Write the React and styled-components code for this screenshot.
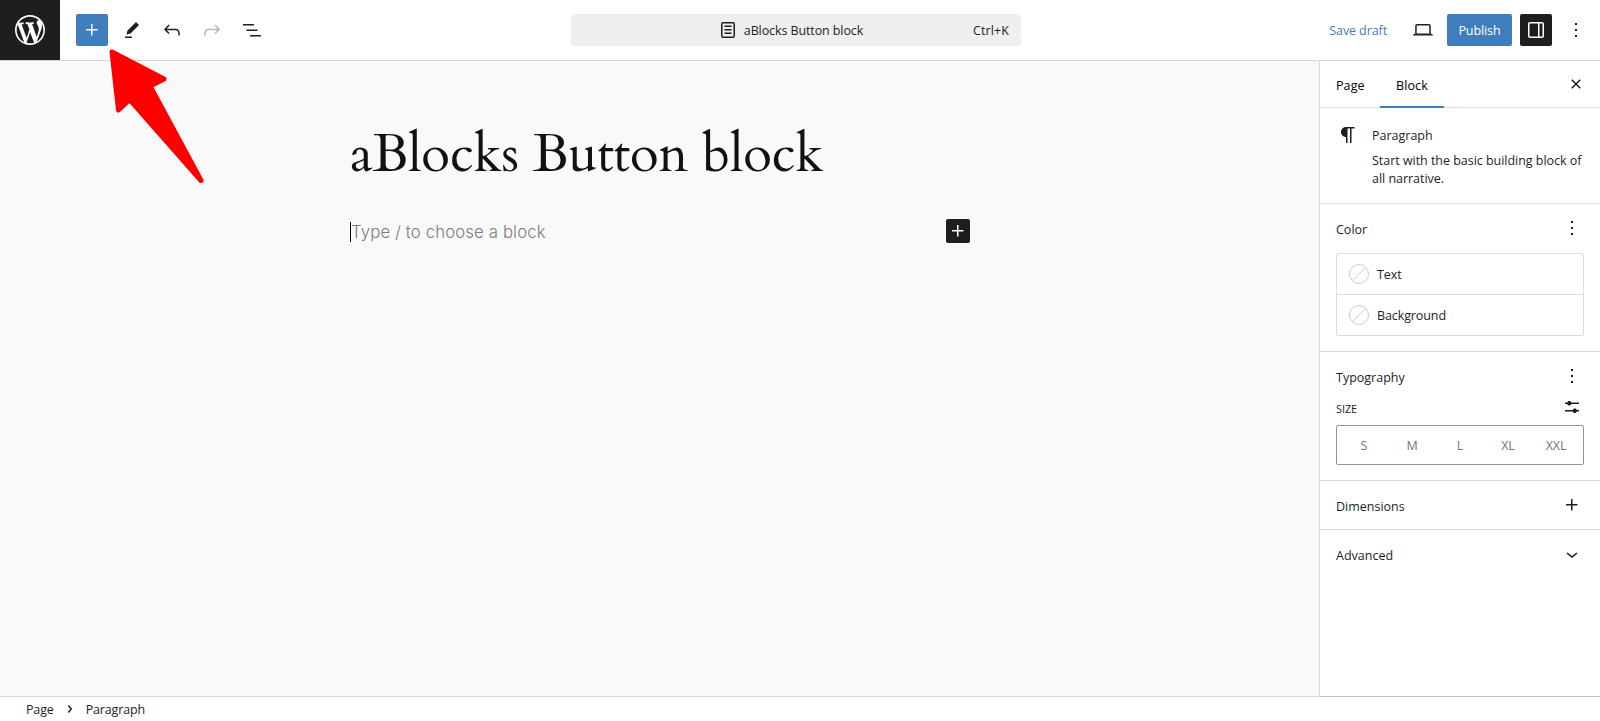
import React from "react";
import styled, { createGlobalStyle } from "styled-components";

const Global = createGlobalStyle`
  *, *::before, *::after { box-sizing: border-box; }
  body { margin: 0; background: #fff; }
  h1, h2, p { margin: 0; }
  button { border: 0; padding: 0; background: none; color: inherit; font: inherit; letter-spacing: inherit; }
`;

const ICONS = {
  plus: ["M11 12.5V17.5H12.5V12.5H17.5V11H12.5V6H11V11H6V12.5H11Z"],
  edit: ["m19 7-3-3-8.5 8.5-1 4 4-1L19 7Zm-7 11.5H5V20h7v-1.5Z"],
  undo: ["M18.3 11.7c-.6-.6-1.4-.9-2.3-.9H6.7l2.9-3.3-1.1-1-4.5 5L8.5 16l1-1-2.7-2.7H16c.5 0 .9.2 1.3.5 1 1 1 3.4 1 4.5v.3h1.5v-.2c0-1.5 0-4.3-1.5-5.7z"],
  redo: ["M15.6 6.5l-1.1 1 2.9 3.3H8c-.9 0-1.7.3-2.3.9-1.4 1.5-1.4 4.2-1.4 5.6v.2h1.5v-.3c0-1.1 0-3.5 1-4.5.3-.3.7-.5 1.3-.5h9.2L14.5 15l1.1 1.1 4.6-4.6-4.6-5z"],
  list: ["M3 6h11v1.5H3V6Zm3.5 5.5h11V13h-11v-1.5ZM21 17H10v1.5h11V17Z"],
  page: [
    "M15.5 7.5h-7V9h7V7.5Zm-7 3.5h7v1.5h-7V11Zm7 3.5h-7V16h7v-1.5Z",
    "M17 4H7a2 2 0 0 0-2 2v12a2 2 0 0 0 2 2h10a2 2 0 0 0 2-2V6a2 2 0 0 0-2-2ZM7 5.5h10a.5.5 0 0 1 .5.5v12a.5.5 0 0 1-.5.5H7a.5.5 0 0 1-.5-.5V6a.5.5 0 0 1 .5-.5Z",
  ],
  desktop: ["M20.5 16h-.7V8c0-1.1-.9-2-2-2H6.2c-1.1 0-2 .9-2 2v8h-.7c-.8 0-1.5.7-1.5 1.5h20c0-.8-.7-1.5-1.5-1.5zM5.7 8c0-.3.2-.5.5-.5h11.6c.3 0 .5.2.5.5v7.6H5.7V8z"],
  drawer: ["M18 4H6c-1.1 0-2 .9-2 2v12c0 1.1.9 2 2 2h12c1.1 0 2-.9 2-2V6c0-1.1-.9-2-2-2zm-4 14.5H6c-.3 0-.5-.2-.5-.5V6c0-.3.2-.5.5-.5h8v13zm4.5-.5c0 .3-.2.5-.5.5h-2.5v-13H18c.3 0 .5.2.5.5v12z"],
  more: ["M13 19h-2v-2h2v2zm0-6h-2v-2h2v2zm0-6h-2V5h2v2z"],
  close: ["M12 13.06l3.712 3.713 1.061-1.06L13.061 12l3.712-3.712-1.06-1.06L12 10.938 8.288 7.227l-1.061 1.06L10.939 12l-3.712 3.712 1.06 1.061L12 13.061z"],
  paragraph: ["m9.99609 14v-.2251l.00391.0001v6.225h1.5v-14.5h2.5v14.5h1.5v-14.5h3v-1.5h-8.50391c-2.76142 0-5 2.23858-5 5 0 2.7614 2.23858 5 5 5z"],
  settings: [
    "m19 7.5h-7.628c-.3089-.87389-1.1423-1.5-2.122-1.5-.97966 0-1.81309.62611-2.12197 1.5h-2.12803v1.5h2.12803c.30888.87389 1.14231 1.5 2.12197 1.5.9797 0 1.8131-.62611 2.122-1.5h7.628z",
    "m19 15h-2.128c-.3089-.8739-1.1423-1.5-2.122-1.5s-1.8131.6261-2.122 1.5h-7.628v1.5h7.628c.3089.8739 1.1423 1.5 2.122 1.5s1.8131-.6261 2.122-1.5h2.128z",
  ],
  chevronDown: ["M17.5 11.6L12 16l-5.5-4.4.9-1.2L12 14l4.5-3.6 1 1.2z"],
  chevronRight: ["M10.8622 8.04053L14.2805 12.0286L10.8622 16.0167L9.72327 15.0405L12.3049 12.0286L9.72327 9.01672L10.8622 8.04053Z"],
};

const Svg = styled.svg`
  display: block;
  flex: none;
  fill: currentColor;
`;

const Icon = ({ name, size = 24 }) => (
  <Svg width={size} height={size} viewBox="0 0 24 24" fillRule="evenodd">
    {ICONS[name].map((d) => <path key={d} d={d} />)}
  </Svg>
);

const WordPressLogo = () => (
  <Svg width="36" height="36" viewBox="-2 -2 24 24">
    <path d="M20 10c0-5.51-4.49-10-10-10C4.48 0 0 4.49 0 10c0 5.52 4.48 10 10 10 5.51 0 10-4.48 10-10zM7.78 15.37L4.37 6.22c.55-.02 1.17-.08 1.17-.08.5-.06.44-1.13-.06-1.11 0 0-1.45.11-2.37.11-.18 0-.37 0-.58-.01C4.12 2.69 6.87 1.11 10 1.11c2.33 0 4.45.87 6.05 2.34-.68-.11-1.65.39-1.65 1.58 0 .74.45 1.36.9 2.1.35.61.55 1.36.55 2.46 0 1.49-1.4 5-1.4 5l-3.03-8.37c.54-.02.82-.17.82-.17.5-.05.44-1.25-.06-1.22 0 0-1.44.12-2.38.12-.87 0-2.33-.12-2.33-.12-.5-.03-.56 1.2-.06 1.22l.92.08 1.26 3.41zM17.41 10c.24-.64.74-1.87.43-4.25.7 1.29 1.05 2.71 1.05 4.25 0 3.29-1.73 6.24-4.4 7.78.97-2.59 1.94-5.2 2.92-7.78zM6.1 18.09C3.12 16.65 1.11 13.53 1.11 10c0-1.3.23-2.48.72-3.59C3.25 10.3 4.67 14.2 6.1 18.09zm4.03-6.63l2.58 6.98c-.86.29-1.76.45-2.71.45-.79 0-1.57-.11-2.29-.33.81-2.38 1.62-4.74 2.42-7.1z" />
  </Svg>
);

const Editor = styled.div`
  position: relative;
  display: flex;
  flex-direction: column;
  width: 1600px;
  height: 721px;
  overflow: hidden;
  background: #fff;
  color: #1e1e1e;
  font: 400 12.5px/18px "Open Sans", "Noto Sans", sans-serif;
  letter-spacing: -0.1px;
`;

const Header = styled.header`
  display: grid;
  grid-template-columns: 571px 450px 1fr;
  align-items: center;
  height: 61px;
  border-bottom: 1px solid #d8d8d8;
`;

const HeaderTools = styled.div`
  display: flex;
  align-items: center;
  gap: 8px;
`;

const HeaderActions = styled(HeaderTools)`
  justify-content: flex-end;
  padding-right: 8px;
`;

const HomeLink = styled.div`
  display: grid;
  place-items: center;
  width: 60px;
  height: 60px;
  margin-right: 8px;
  background: #1e1e1e;
  color: #fff;
`;

const TONES = {
  plain: "background: transparent; color: #1e1e1e;",
  primary: "background: #407dbd; color: #fff;",
  dark: "background: #1e1e1e; color: #fff;",
  disabled: "background: transparent; color: #b8b8b8;",
};

const IconButton = styled.button`
  display: grid;
  place-items: center;
  flex: none;
  width: ${(p) => p.$size || 32}px;
  height: ${(p) => p.$size || 32}px;
  border-radius: 2px;
  ${(p) => TONES[p.$tone || "plain"]}
`;

const CommandBar = styled.div`
  display: grid;
  grid-template-columns: 1fr auto 1fr;
  align-items: center;
  height: 32px;
  padding: 0 12px;
  border-radius: 4px;
  background: #efefef;
`;

const DocumentTitle = styled.div`
  grid-column: 2;
  display: flex;
  align-items: center;
  gap: 4px;
  margin-right: 13px;

  span { padding-top: 1px; }
`;

const Shortcut = styled.span`
  justify-self: end;
  padding-top: 1px;
  letter-spacing: 0.1px;
`;

const TextButton = styled.button`
  height: 32px;
  padding: 2px 12px 0;
  border-radius: 2px;
  background: ${(p) => (p.$primary ? "#407dbd" : "transparent")};
  color: ${(p) => (p.$primary ? "#fff" : "#407dbd")};
  font-weight: ${(p) => (p.$primary ? 500 : 400)};
  ${(p) => p.$primary && "width: 65px; padding: 2px 0 0;"}
`;

const Body = styled.div`
  display: flex;
  height: 636px;
`;

const Canvas = styled.main`
  flex: 1;
  padding: 61px 0 0 350px;
  border-bottom: 1px solid #ddd;
  background: #f9f9f9;
`;

const PostTitle = styled.h1`
  height: 66px;
  color: #111;
  font: 400 52.9px/66px "Cardo", "Liberation Serif", serif;
  letter-spacing: -0.3px;
  white-space: nowrap;
`;

const EmptyBlock = styled.div`
  display: flex;
  align-items: center;
  justify-content: space-between;
  width: 620px;
  height: 24px;
  margin-top: 31px;
`;

const Placeholder = styled.p`
  height: 20px;
  margin-top: 2px;
  border-left: 1px solid #000;
  color: #7c7c7c;
  font: 300 16.8px/20px Inter, sans-serif;
  letter-spacing: 0.11px;
`;

const Sidebar = styled.aside`
  width: 281px;
  border-left: 1px solid #d8d8d8;
  border-bottom: 1px solid #c4c4c4;
  background: #fff;
`;

const Tabs = styled.div`
  display: flex;
  height: 47px;
  padding-right: 8px;
  border-bottom: 1px solid #ddd;
`;

const Tab = styled.button`
  height: 47px;
  padding: 2px 0 0 16px;
  color: #000;
  font-weight: 500;
  letter-spacing: 0.1px;
  text-align: left;
  width: ${(p) => p.$width}px;
  box-shadow: ${(p) => (p.$active ? "inset 0 -2px 0 #407dbd" : "none")};
`;

const TabClose = styled.div`
  margin: 7px 0 0 auto;
`;

const BlockCard = styled.section`
  display: flex;
  gap: 12px;
  height: 96px;
  padding: 15px 16px;
  border-bottom: 1px solid #ddd;
`;

const BlockText = styled.div`
  padding-top: 3px;
`;

const Heading = styled.h2`
  font-size: inherit;
  line-height: 20px;
  font-weight: 500;
  letter-spacing: 0;
`;

const Description = styled.p`
  margin-top: 6px;
  letter-spacing: -0.03px;
  white-space: nowrap;
`;

const Panel = styled.section`
  height: ${(p) => p.$height}px;
  padding: 0 16px;
  border-bottom: ${(p) => (p.$last ? 0 : "1px solid #ddd")};
`;

const PanelHeader = styled.div`
  display: flex;
  align-items: center;
  justify-content: space-between;
  height: 48px;

  ${Heading} { padding-top: 4px; }
`;

const ColorList = styled.div`
  height: 83px;
  margin-top: 1px;
  border: 1px solid #ddd;
  border-radius: 2px;
`;

const ColorRow = styled.div`
  display: flex;
  align-items: center;
  gap: 8px;
  height: 40px;
  padding: 0 12px;

  & + & { height: 41px; border-top: 1px solid #ddd; }
`;

const ColorName = styled.span`
  padding-top: 1px;
`;

const Swatch = styled.span`
  width: 20px;
  height: 20px;
  border: 1px solid #ccc;
  border-radius: 50%;
  background: linear-gradient(-45deg, transparent 48%, #ccc 48%, #ccc 52%, transparent 52%);
`;

const SizeHeader = styled.div`
  display: flex;
  align-items: center;
  justify-content: space-between;
  height: 24px;
  margin-top: -5px;
  font-size: 10.8px;
  font-weight: 500;
  letter-spacing: 0;
`;

const SizeLabel = styled.span`
  padding-top: 4px;
`;

const SizeOptions = styled.div`
  display: grid;
  grid-template-columns: repeat(5, 48px);
  justify-content: center;
  align-items: center;
  height: 40px;
  margin-top: 6px;
  padding-top: 1px;
  border: 1px solid #949494;
  border-radius: 2px;
  color: #757575;
  text-align: center;
`;

const Footer = styled.footer`
  display: flex;
  align-items: center;
  height: 24px;
  padding-left: 26px;
`;

const Crumb = styled.span`
  padding-top: 1px;
  letter-spacing: -0.15px;
`;

const CrumbDivider = styled.span`
  margin: 0 4px;
`;

const Pointer = styled.svg`
  position: absolute;
  left: 100px;
  top: 40px;
  fill: #f00;
  stroke: #f00;
  stroke-width: 5;
  stroke-linejoin: round;
`;

export default function App() {
  return (
    <Editor>
      <Global />
      <Header>
        <HeaderTools>
          <HomeLink><WordPressLogo /></HomeLink>
          <IconButton $tone="primary"><Icon name="plus" /></IconButton>
          <IconButton><Icon name="edit" /></IconButton>
          <IconButton><Icon name="undo" /></IconButton>
          <IconButton $tone="disabled"><Icon name="redo" /></IconButton>
          <IconButton><Icon name="list" /></IconButton>
        </HeaderTools>
        <CommandBar>
          <DocumentTitle><Icon name="page" /><span>aBlocks Button block</span></DocumentTitle>
          <Shortcut>Ctrl+K</Shortcut>
        </CommandBar>
        <HeaderActions>
          <TextButton>Save draft</TextButton>
          <IconButton><Icon name="desktop" /></IconButton>
          <TextButton $primary>Publish</TextButton>
          <IconButton $tone="dark"><Icon name="drawer" /></IconButton>
          <IconButton><Icon name="more" /></IconButton>
        </HeaderActions>
      </Header>

      <Body>
        <Canvas>
          <PostTitle>aBlocks Button block</PostTitle>
          <EmptyBlock>
            <Placeholder>Type / to choose a block</Placeholder>
            <IconButton $tone="dark" $size={24}><Icon name="plus" /></IconButton>
          </EmptyBlock>
        </Canvas>

        <Sidebar>
          <Tabs>
            <Tab $width={60}>Page</Tab>
            <Tab $width={64} $active>Block</Tab>
            <TabClose><IconButton><Icon name="close" /></IconButton></TabClose>
          </Tabs>
          <BlockCard>
            <Icon name="paragraph" />
            <BlockText>
              <Heading>Paragraph</Heading>
              <Description>Start with the basic building block of<br />all narrative.</Description>
            </BlockText>
          </BlockCard>
          <Panel $height={148}>
            <PanelHeader><Heading>Color</Heading><Icon name="more" /></PanelHeader>
            <ColorList>
              <ColorRow><Swatch /><ColorName>Text</ColorName></ColorRow>
              <ColorRow><Swatch /><ColorName>Background</ColorName></ColorRow>
            </ColorList>
          </Panel>
          <Panel $height={129}>
            <PanelHeader><Heading>Typography</Heading><Icon name="more" /></PanelHeader>
            <SizeHeader><SizeLabel>SIZE</SizeLabel><Icon name="settings" /></SizeHeader>
            <SizeOptions>
              {["S", "M", "L", "XL", "XXL"].map((size) => <span key={size}>{size}</span>)}
            </SizeOptions>
          </Panel>
          <Panel $height={49}>
            <PanelHeader><Heading>Dimensions</Heading><Icon name="plus" /></PanelHeader>
          </Panel>
          <Panel $height={49} $last>
            <PanelHeader><Heading>Advanced</Heading><Icon name="chevronDown" /></PanelHeader>
          </Panel>
        </Sidebar>
      </Body>

      <Footer>
        <Crumb>Page</Crumb>
        <CrumbDivider><Icon name="chevronRight" /></CrumbDivider>
        <Crumb>Paragraph</Crumb>
      </Footer>

      <Pointer width="110" height="150" viewBox="100 40 110 150">
        <path d="M112 52 164 79 150 86 201 180.500 129.700 99.500 118.500 110Z" />
      </Pointer>
    </Editor>
  );
}
